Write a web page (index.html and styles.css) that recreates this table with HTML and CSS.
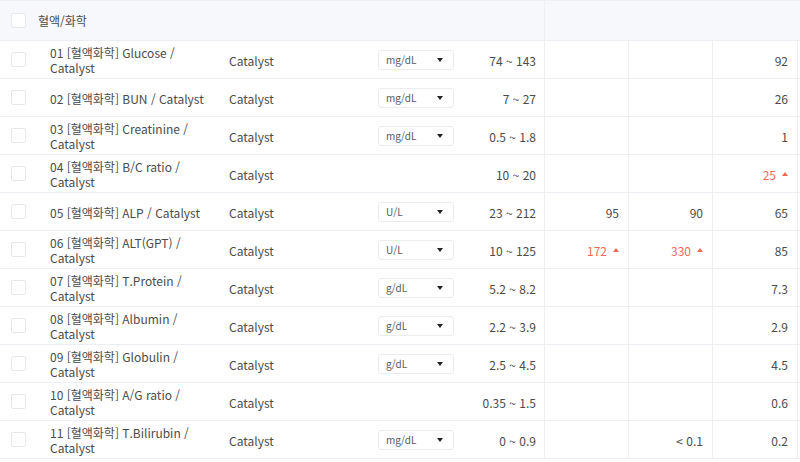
FILE: index.html
```html
<!DOCTYPE html>
<html lang="ko">
<head>
<meta charset="utf-8">
<link rel="stylesheet" href="styles.css">
</head>
<body>
<div class="table">
  <div class="head">
    <div class="head-main"><span class="cb"></span><span class="head-title">혈액/화학</span></div>
    <div class="head-side"></div>
  </div>

  <div class="row">
    <div class="c-cb"><span class="cb"></span></div>
    <div class="c-name">01 [혈액화학] Glucose / Catalyst</div>
    <div class="c-dev">Catalyst</div>
    <div class="c-unit"><div class="sel"><span>mg/dL</span><i class="caret"></i></div></div>
    <div class="c-range">74 ~ 143</div>
    <div class="c-gap"></div>
    <div class="c-val"></div>
    <div class="c-val"></div>
    <div class="c-val">92</div>
    <div class="c-end"></div>
  </div>

  <div class="row">
    <div class="c-cb"><span class="cb"></span></div>
    <div class="c-name">02 [혈액화학] BUN / Catalyst</div>
    <div class="c-dev">Catalyst</div>
    <div class="c-unit"><div class="sel"><span>mg/dL</span><i class="caret"></i></div></div>
    <div class="c-range">7 ~ 27</div>
    <div class="c-gap"></div>
    <div class="c-val"></div>
    <div class="c-val"></div>
    <div class="c-val">26</div>
    <div class="c-end"></div>
  </div>

  <div class="row">
    <div class="c-cb"><span class="cb"></span></div>
    <div class="c-name">03 [혈액화학] Creatinine / Catalyst</div>
    <div class="c-dev">Catalyst</div>
    <div class="c-unit"><div class="sel"><span>mg/dL</span><i class="caret"></i></div></div>
    <div class="c-range">0.5 ~ 1.8</div>
    <div class="c-gap"></div>
    <div class="c-val"></div>
    <div class="c-val"></div>
    <div class="c-val">1</div>
    <div class="c-end"></div>
  </div>

  <div class="row">
    <div class="c-cb"><span class="cb"></span></div>
    <div class="c-name">04 [혈액화학] B/C ratio / Catalyst</div>
    <div class="c-dev">Catalyst</div>
    <div class="c-unit"></div>
    <div class="c-range">10 ~ 20</div>
    <div class="c-gap"></div>
    <div class="c-val"></div>
    <div class="c-val"></div>
    <div class="c-val high">25<i class="up"></i></div>
    <div class="c-end"></div>
  </div>

  <div class="row">
    <div class="c-cb"><span class="cb"></span></div>
    <div class="c-name">05 [혈액화학] ALP / Catalyst</div>
    <div class="c-dev">Catalyst</div>
    <div class="c-unit"><div class="sel"><span>U/L</span><i class="caret"></i></div></div>
    <div class="c-range">23 ~ 212</div>
    <div class="c-gap"></div>
    <div class="c-val">95</div>
    <div class="c-val">90</div>
    <div class="c-val">65</div>
    <div class="c-end"></div>
  </div>

  <div class="row">
    <div class="c-cb"><span class="cb"></span></div>
    <div class="c-name">06 [혈액화학] ALT(GPT) / Catalyst</div>
    <div class="c-dev">Catalyst</div>
    <div class="c-unit"><div class="sel"><span>U/L</span><i class="caret"></i></div></div>
    <div class="c-range">10 ~ 125</div>
    <div class="c-gap"></div>
    <div class="c-val high">172<i class="up"></i></div>
    <div class="c-val high">330<i class="up"></i></div>
    <div class="c-val">85</div>
    <div class="c-end"></div>
  </div>

  <div class="row">
    <div class="c-cb"><span class="cb"></span></div>
    <div class="c-name">07 [혈액화학] T.Protein / Catalyst</div>
    <div class="c-dev">Catalyst</div>
    <div class="c-unit"><div class="sel"><span>g/dL</span><i class="caret"></i></div></div>
    <div class="c-range">5.2 ~ 8.2</div>
    <div class="c-gap"></div>
    <div class="c-val"></div>
    <div class="c-val"></div>
    <div class="c-val">7.3</div>
    <div class="c-end"></div>
  </div>

  <div class="row">
    <div class="c-cb"><span class="cb"></span></div>
    <div class="c-name">08 [혈액화학] Albumin / Catalyst</div>
    <div class="c-dev">Catalyst</div>
    <div class="c-unit"><div class="sel"><span>g/dL</span><i class="caret"></i></div></div>
    <div class="c-range">2.2 ~ 3.9</div>
    <div class="c-gap"></div>
    <div class="c-val"></div>
    <div class="c-val"></div>
    <div class="c-val">2.9</div>
    <div class="c-end"></div>
  </div>

  <div class="row">
    <div class="c-cb"><span class="cb"></span></div>
    <div class="c-name">09 [혈액화학] Globulin / Catalyst</div>
    <div class="c-dev">Catalyst</div>
    <div class="c-unit"><div class="sel"><span>g/dL</span><i class="caret"></i></div></div>
    <div class="c-range">2.5 ~ 4.5</div>
    <div class="c-gap"></div>
    <div class="c-val"></div>
    <div class="c-val"></div>
    <div class="c-val">4.5</div>
    <div class="c-end"></div>
  </div>

  <div class="row">
    <div class="c-cb"><span class="cb"></span></div>
    <div class="c-name">10 [혈액화학] A/G ratio / Catalyst</div>
    <div class="c-dev">Catalyst</div>
    <div class="c-unit"></div>
    <div class="c-range">0.35 ~ 1.5</div>
    <div class="c-gap"></div>
    <div class="c-val"></div>
    <div class="c-val"></div>
    <div class="c-val">0.6</div>
    <div class="c-end"></div>
  </div>

  <div class="row">
    <div class="c-cb"><span class="cb"></span></div>
    <div class="c-name">11 [혈액화학] T.Bilirubin / Catalyst</div>
    <div class="c-dev">Catalyst</div>
    <div class="c-unit"><div class="sel"><span>mg/dL</span><i class="caret"></i></div></div>
    <div class="c-range">0 ~ 0.9</div>
    <div class="c-gap"></div>
    <div class="c-val"></div>
    <div class="c-val">&lt; 0.1</div>
    <div class="c-val">0.2</div>
    <div class="c-end"></div>
  </div>
</div>
</body>
</html>
```

FILE: styles.css
```css
* { box-sizing: border-box; }
html, body {
  margin: 0;
  padding: 0;
  background: #ffffff;
}
body {
  font-family: "Noto Sans CJK KR", "Noto Sans", sans-serif;
  font-size: 12px;
  color: #4b4b4b;
  width: 800px;
  height: 462px;
  overflow: hidden;
}
.table {
  width: 800px;
}
.head {
  display: grid;
  grid-template-columns: 544px 256px;
  height: 41px;
  background: #f7f8fb;
  border-top: 1px solid #eef0f4;
  border-bottom: 1px solid #eceef3;
}
.head-main {
  display: flex;
  align-items: center;
  padding-left: 11px;
}
.head-title {
  margin-left: 12px;
  font-size: 12px;
  color: #4b4b4b;
}
.head-side {
  border-left: 1px solid #eceef3;
}
.cb {
  display: inline-block;
  width: 15px;
  height: 15px;
  border: 1px solid #e6e8ec;
  border-radius: 2px;
  background: #ffffff;
}
.row {
  display: grid;
  grid-template-columns: 50px 179px 149px 76px 82px 8px 84px 84px 85px 3px;
  height: 38px;
  border-bottom: 1px solid #eceef3;
  align-items: stretch;
}
.row > div {
  display: flex;
  align-items: center;
}
.c-cb {
  padding-left: 11px;
}
.c-name {
  line-height: 15px;
  padding-right: 14px;
  padding-top: 1px;
}
.c-dev {
  padding-top: 1px;
}
.c-range {
  justify-content: flex-end;
  padding-top: 1px;
}
.c-val {
  justify-content: flex-end;
  border-left: 1px solid #eceef3;
  padding-right: 9px;
  padding-top: 1px;
}
.c-end {
  border-left: 1px solid #eceef3;
}
.sel {
  width: 76px;
  height: 20px;
  border: 1px solid #eaecf0;
  border-radius: 3px;
  display: flex;
  align-items: center;
  justify-content: space-between;
  padding: 0 10px 0 7px;
  font-size: 10px;
  color: #555a66;
}
.caret {
  width: 0;
  height: 0;
  border-left: 3.5px solid transparent;
  border-right: 3.5px solid transparent;
  border-top: 4px solid #222;
}
.high {
  color: #f26a56;
}
.up {
  display: inline-block;
  width: 0;
  height: 0;
  margin-left: 6px;
  border-left: 3.5px solid transparent;
  border-right: 3.5px solid transparent;
  border-bottom: 4px solid #f26a56;
}
```
